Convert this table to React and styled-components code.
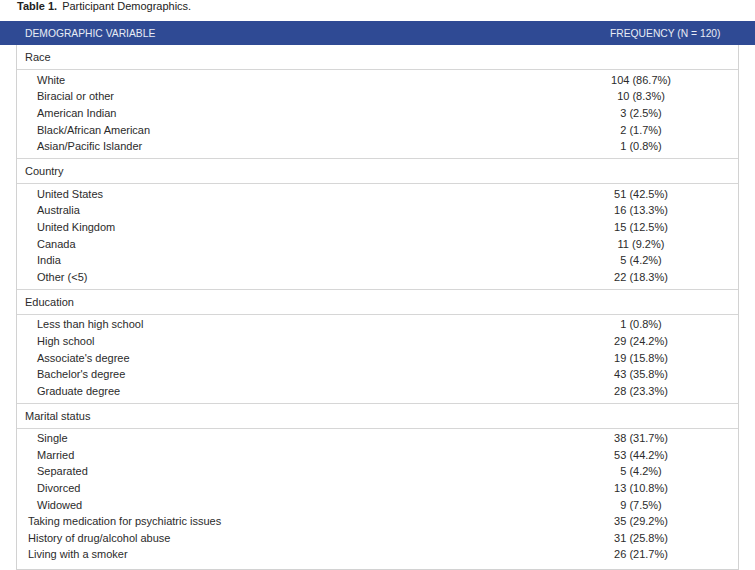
import React from 'react';
import styled, { createGlobalStyle } from 'styled-components';

const GlobalStyle = createGlobalStyle`
  html, body {
    margin: 0;
    padding: 0;
    background: #ffffff;
  }
  body {
    font-family: "Liberation Sans", Arial, Helvetica, sans-serif;
    color: #2b2b2b;
  }
`;

const Page = styled.div`
  width: 755px;
  height: 570px;
  overflow: hidden;
`;

const Caption = styled.div`
  height: 21px;
  padding-left: 17px;
  font-size: 11px;
  line-height: 13px;
  color: #222;
  box-sizing: border-box;
`;

const CaptionLabel = styled.b`
  font-weight: 700;
  margin-right: 5px;
`;

const HeadBar = styled.div`
  display: grid;
  grid-template-columns: 1fr 145px;
  align-items: center;
  height: 24px;
  padding-left: 25px;
  background: #2f4a94;
  color: #e8ecf5;
  font-size: 10.3px;
  text-transform: uppercase;
`;

const Body = styled.div`
  margin-left: 16px;
  width: 723px;
  box-sizing: border-box;
  border-left: 1px solid #d2d2d2;
  border-right: 1px solid #d2d2d2;
  border-bottom: 1px solid #d2d2d2;
  font-size: 11px;
`;

const SectionHead = styled.div`
  height: 24px;
  line-height: 25px;
  padding-left: 8px;
  border-bottom: 1px solid #d6d6d6;
`;

const Group = styled.div`
  padding: 2px 0 ${p => (p.last ? '6px' : '3px')};
  border-bottom: ${p => (p.last ? 'none' : '1px solid #d6d6d6')};
`;

const Row = styled.div`
  display: flex;
  align-items: center;
  height: 16.6px;
  line-height: 17px;
  padding-left: ${p => (p.top ? '11px' : '20px')};
`;

const Label = styled.span`
  flex: 1;
  white-space: nowrap;
`;

const Value = styled.span`
  width: 62px;
  margin-right: 66px;
  text-align: center;
  white-space: nowrap;
`;

const sections = [
  {
    title: 'Race',
    rows: [
      ['White', '104 (86.7%)'],
      ['Biracial or other', '10 (8.3%)'],
      ['American Indian', '3 (2.5%)'],
      ['Black/African American', '2 (1.7%)'],
      ['Asian/Pacific Islander', '1 (0.8%)'],
    ],
  },
  {
    title: 'Country',
    rows: [
      ['United States', '51 (42.5%)'],
      ['Australia', '16 (13.3%)'],
      ['United Kingdom', '15 (12.5%)'],
      ['Canada', '11 (9.2%)'],
      ['India', '5 (4.2%)'],
      ['Other (<5)', '22 (18.3%)'],
    ],
  },
  {
    title: 'Education',
    rows: [
      ['Less than high school', '1 (0.8%)'],
      ['High school', '29 (24.2%)'],
      ["Associate's degree", '19 (15.8%)'],
      ["Bachelor's degree", '43 (35.8%)'],
      ['Graduate degree', '28 (23.3%)'],
    ],
  },
  {
    title: 'Marital status',
    rows: [
      ['Single', '38 (31.7%)'],
      ['Married', '53 (44.2%)'],
      ['Separated', '5 (4.2%)'],
      ['Divorced', '13 (10.8%)'],
      ['Widowed', '9 (7.5%)'],
    ],
    extra: [
      ['Taking medication for psychiatric issues', '35 (29.2%)'],
      ['History of drug/alcohol abuse', '31 (25.8%)'],
      ['Living with a smoker', '26 (21.7%)'],
    ],
  },
];

const App = () => (
  <Page>
    <GlobalStyle />
    <Caption>
      <CaptionLabel>Table 1.</CaptionLabel>Participant Demographics.
    </Caption>
    <HeadBar>
      <span>Demographic variable</span>
      <span>Frequency (N = 120)</span>
    </HeadBar>
    <Body>
      {sections.map((s, i) => {
        const last = i === sections.length - 1;
        return (
          <React.Fragment key={s.title}>
            <SectionHead>{s.title}</SectionHead>
            <Group last={last}>
              {s.rows.map(([label, value]) => (
                <Row key={label}>
                  <Label>{label}</Label>
                  <Value>{value}</Value>
                </Row>
              ))}
              {s.extra &&
                s.extra.map(([label, value]) => (
                  <Row key={label} top>
                    <Label>{label}</Label>
                    <Value>{value}</Value>
                  </Row>
                ))}
            </Group>
          </React.Fragment>
        );
      })}
    </Body>
  </Page>
);

export default App;
